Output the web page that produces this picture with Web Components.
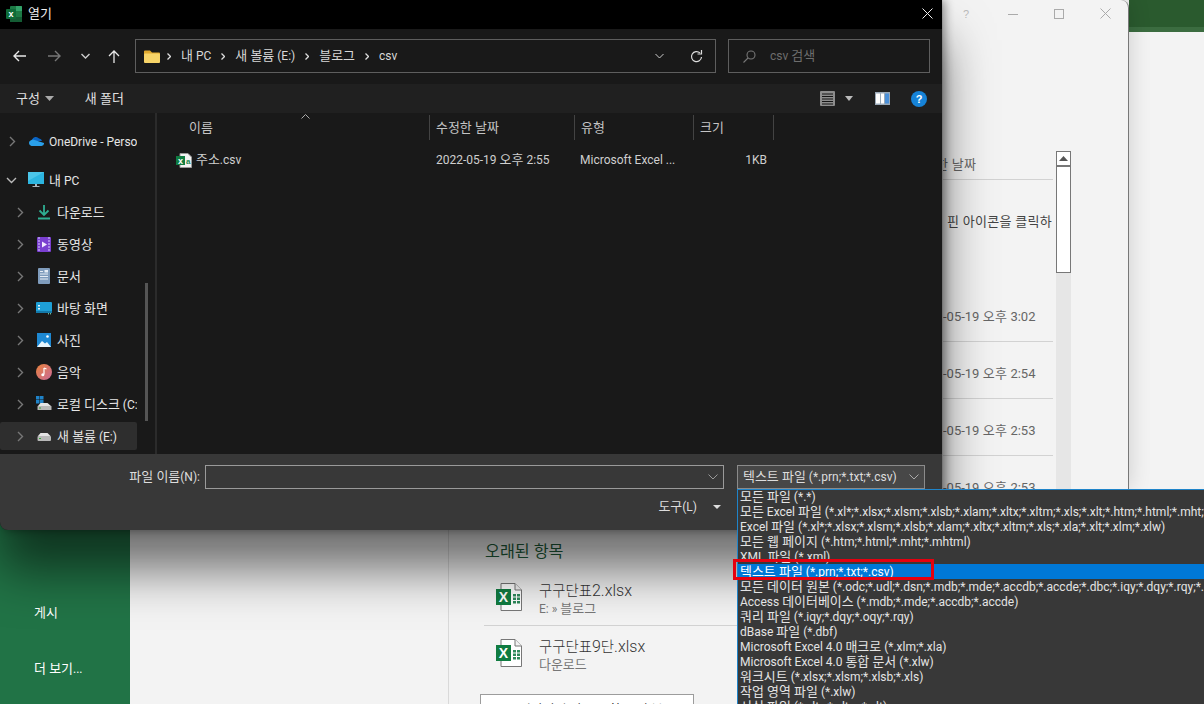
<!DOCTYPE html>
<html lang="ko"><head><meta charset="utf-8">
<style>
html,body{margin:0;padding:0;width:1204px;height:704px;overflow:hidden;background:#fff}
body{font:12px/15px Roboto,"Noto Sans CJK KR",sans-serif}
</style></head><body>
<x-desktop>
  <excel-backstage></excel-backstage>
  <details-window></details-window>
  <file-dialog></file-dialog>
  <type-list></type-list>
  <red-mark></red-mark>
</x-desktop>

<script>
function hangul(root){
  const w=document.createTreeWalker(root,NodeFilter.SHOW_TEXT),nodes=[];
  while(w.nextNode()){const p=w.currentNode.parentNode;if(p.nodeName!=='STYLE'&&p.nodeName.toLowerCase()!=='text'&&/[가-힣]/.test(w.currentNode.data))nodes.push(w.currentNode);}
  nodes.forEach(n=>{
    const f=document.createDocumentFragment();
    n.data.split(/([가-힣]+(?: +[가-힣]+)*)/).forEach((s,i)=>{
      if(!s)return;
      if(i%2){const e=document.createElement('span');e.style.cssText='font-size:calc(1em*var(--k,1.08));letter-spacing:var(--ks,0);display:inline';e.textContent=s;f.appendChild(e);}
      else f.appendChild(document.createTextNode(s));
    });
    n.parentNode.replaceChild(f,n);
  });
}
function def(name,html){
  customElements.define(name,class extends HTMLElement{
    constructor(){super();const r=this.attachShadow({mode:'open'});r.innerHTML=typeof html==='function'?html(this):html;hangul(r);}
  });
}
const xl=`<svg width="26" height="28" viewBox="0 0 26 28"><path d="M5 .5h14l6.500 6.500v20.500H5z" fill="#fff" stroke="#777"/><path d="M19 .5V7h6.500" fill="#f3f3f3" stroke="#777"/><rect x="0" y="6" width="15" height="16" fill="#107c41"/><text x="7.500" y="19" text-anchor="middle" font-family="Liberation Sans" font-weight="700" font-size="14" fill="#fff">X</text><path d="M17 11h3v2.500h-3zM21 11h3v2.500h-3zM17 14.500h3V17h-3zM21 14.500h3V17h-3zM17 18h3v2.500h-3zM21 18h3v2.500h-3z" fill="#2f8a5b"/></svg>`;

def('x-desktop',`<style>:host{display:block;position:relative;width:1204px;height:704px;overflow:hidden;background:#fff}</style><slot></slot>`);

def('red-mark',`<style>:host{position:absolute;left:733px;top:559px;width:201px;height:21px;box-sizing:border-box;border:3px solid #e5000f}</style>`);

def('file-row',h=>`<style>
:host{display:grid;grid-template-columns:26px 1fr;column-gap:17px;height:55px;padding-top:2px;align-items:center;box-sizing:border-box;padding-left:12px;border-bottom:1px solid #d2d2d2;color:#444}
:host([last]){border-bottom:0;height:57px;padding-top:0}
.n{font-size:16px;line-height:19px;color:#333;--k:.9;font-weight:300}
.s{font-size:12px;line-height:15px;color:#777;--k:1.08}
</style><span>${xl}</span><div><div class="n">${h.getAttribute('name')}</div><div class="s">${h.getAttribute('sub')}</div></div>`);

def('excel-backstage',`<style>
:host{position:absolute;left:0;top:0;width:1204px;height:704px;display:grid;grid-template-columns:130px 319px 1fr;background:#f3f3f3;color:#333}
nav{background:#217346;color:#fff;display:flex;flex-direction:column;padding:605px 0 0 34px;font-size:12px;line-height:16px;gap:40px;box-sizing:border-box;height:704px}
.mid{border-right:1px solid #d9d9d9}
.rt{padding:542px 0 0 36px;box-sizing:border-box;height:704px;display:flex;flex-direction:column}
h3{margin:0;font-weight:400;font-size:15px;line-height:20px;color:#1e5c3a}
.list{margin-top:9px;margin-left:-1px;width:400px;display:flex;flex-direction:column}
.btn{margin:11px 0 0 -5px;width:214px;height:40px;flex:none;box-sizing:border-box;border:1px solid #9c9c9c;background:#fff;padding:7px 0 0 16px;display:flex;gap:8px;font-size:12px;color:#222;white-space:nowrap}
.bar{position:absolute;left:1129px;right:0;top:0;height:32px;background:linear-gradient(#2a5a2e 27px,#3b6c40 27px)}
</style>
<nav><span>게시</span><span>더 보기...</span></nav><div class="mid"></div>
<div class="rt"><h3>오래된 항목</h3>
<div class="list"><file-row name="구구단표2.xlsx" sub="E: » 블로그"></file-row><file-row name="구구단표9단.xlsx" sub="다운로드" last></file-row></div>
<div class="btn"><svg width="14" height="14" viewBox="0 0 14 14"><path d="M1 3h5l1 1h6v8H1z" fill="#f0d58a" stroke="#c9a94f"/></svg><span>저장되지 않은 통합 문서 복구</span></div></div>
<div class="bar"></div>`);

def('details-window',`<style>
:host{position:absolute;left:943px;top:0;width:186px;height:489px;box-sizing:border-box;background:#f3f3f3;border-right:1px solid #777;border-top-right-radius:8px;color:#666;font-size:13px;line-height:18px;box-shadow:0 0 22px rgba(0,0,0,.16);overflow:hidden;display:flex;flex-direction:column;--k:1;--ks:.3px}
.tb{height:27px;display:grid;grid-template-columns:repeat(4,46.5px);justify-items:center;align-items:center;flex:none}
.tb svg{display:block}
.body{flex:1;display:grid;grid-template-columns:110px 15px;column-gap:3px;padding-top:124px;min-height:0}
.cols{display:flex;flex-direction:column}
.hd{height:23px;border-bottom:1px solid #d2d2d2;overflow:hidden;white-space:nowrap;padding-top:5px;text-indent:-7px}
.pin{height:18px;padding:33px 0 54px 4px;color:#444;white-space:nowrap;overflow:hidden}
.d{height:33px;padding-top:23px;border-bottom:1px solid #d2d2d2;white-space:nowrap;flex:none}
.sb{background:#e6e6e6;display:flex;flex-direction:column}
.up{height:15px;box-sizing:border-box;background:#fff;border:1px solid #777;display:flex;align-items:center;justify-content:center;flex:none}
.th{height:107px;box-sizing:border-box;background:#fff;border:1px solid #777;flex:none}
</style>
<div class="tb">
<svg width="10" height="12" viewBox="0 0 10 12"><text x="5" y="10" text-anchor="middle" font-family="Liberation Sans" font-size="11" fill="#bbb">?</text></svg>
<svg width="10" height="10" viewBox="0 0 10 10"><path d="M0 5.500h10" stroke="#aaa"/></svg>
<svg width="10" height="10" viewBox="0 0 10 10"><rect x=".5" y=".5" width="9" height="9" fill="none" stroke="#aaa"/></svg>
<svg width="11" height="11" viewBox="0 0 11 11"><path d="M.5.5l10 10M10.500.5l-10 10" stroke="#aaa"/></svg>
</div>
<div class="body"><div class="cols">
<div class="hd">한 날짜</div>
<div class="pin">핀 아이콘을 클릭하</div>
<div class="d">-05-19 오후 3:02</div><div class="d">-05-19 오후 2:54</div><div class="d">-05-19 오후 2:53</div><div class="d">-05-19 오후 2:53</div>
</div><div class="sb"><div class="up"><svg width="9" height="5" viewBox="0 0 9 5"><path d="M4.500 0L9 5H0z" fill="#555"/></svg></div><div class="th"></div></div></div>`);

const chev=`<svg width="7" height="11" viewBox="0 0 7 11"><path d="M1 1l4.500 4.500L1 10" fill="none" stroke="#777" stroke-width="1.400"/></svg>`;
const chevD=`<svg width="11" height="7" viewBox="0 0 11 7"><path d="M1 1l4.500 4.500L10 1" fill="none" stroke="#bbb" stroke-width="1.400"/></svg>`;
const crumbCh=`<svg class="cc" width="4" height="7" viewBox="0 0 4 7"><path d="M.5.5l3 3-3 3" fill="none" stroke="#ddd" stroke-width="1.300"/></svg>`;
const ICONS={
 onedrive:`<svg width="16" height="16" viewBox="0 0 16 16"><path d="M4 7a4 4 0 0 1 7-1.500 3 3 0 0 1 3 2.500H5z" fill="#0a64c4"/><path d="M3.500 13a3 3 0 0 1-.5-5.800A3 3 0 0 1 6.500 7L16 10a2.800 2.800 0 0 1-2.500 3z" fill="#2aa0ea"/></svg>`,
 pc:`<svg width="16" height="16" viewBox="0 0 16 16"><rect x="0" y="0" width="16" height="12" fill="#2cb5e0"/><path d="M0 0h16L0 9z" fill="#6ad6ef" opacity=".5"/><path d="M7 12h2v2H7zM4.500 14h7v1h-7z" fill="#a9b6bf"/></svg>`,
 down:`<svg width="16" height="16" viewBox="0 0 16 16"><path d="M8 1v10M3.500 6.500L8 11l4.500-4.500" fill="none" stroke="#2fae92" stroke-width="1.800"/><path d="M2 14.500h12" stroke="#2fae92" stroke-width="2"/></svg>`,
 video:`<svg width="16" height="16" viewBox="0 0 16 16"><rect x="1" y="1" width="14" height="15" rx="1" fill="#7a3fd0"/><path d="M3 1v15M13 1v15" stroke="#a988e6" stroke-width="2" stroke-dasharray="2 1"/><path d="M6 5.500l5 3-5 3z" fill="#f3e9ff"/></svg>`,
 doc:`<svg width="16" height="16" viewBox="0 0 16 16"><rect x="2" y="0" width="12" height="16" rx="1" fill="#7f9cbc"/><path d="M4 3.500h3M4 6h8M4 8.500h8M4 11h8" stroke="#e6edf5"/><rect x="8.500" y="2" width="3.500" height="2.500" fill="#e6edf5"/></svg>`,
 desk:`<svg width="16" height="16" viewBox="0 0 16 16"><rect x="0" y="2" width="16" height="11" rx="1" fill="#1e9fd6"/><path d="M0 11h16v2H0z" fill="#1479aa"/><path d="M2 5h2v1.500H2zM2 8h2v1.500H2z" fill="#e6f7ff"/><path d="M12 13.800h1M14 13.800h1" stroke="#9fc"/></svg>`,
 photo:`<svg width="16" height="16" viewBox="0 0 16 16"><rect x="1" y="1" width="14" height="14" fill="#1e88d2"/><path d="M1 15l5-6 3 2.500 2-1.500 4 5z" fill="#e8f5fc"/><circle cx="11.500" cy="4.500" r="1.300" fill="#fff"/></svg>`,
 music:`<svg width="16" height="16" viewBox="0 0 16 16"><defs><linearGradient id="m" x1="0" y1="0" x2="1" y2="1"><stop offset="0" stop-color="#e9823c"/><stop offset="1" stop-color="#c96a98"/></linearGradient></defs><circle cx="8" cy="8" r="8" fill="url(#m)"/><path d="M8 4v6.500" stroke="#fff" stroke-width="1.200"/><circle cx="6.800" cy="10.800" r="1.500" fill="#fff"/><path d="M8 4l2.500 1" stroke="#fff" stroke-width="1.200"/></svg>`,
 c:`<svg width="16" height="16" viewBox="0 0 16 16"><path d="M0 0h3.500v3.500H0zM4 0h3.500v3.500H4zM0 4h3.500v3.500H0zM4 4h3.500v3.500H4z" fill="#1f83c9"/><path d="M2 10l2.500-3h7L15 10z" fill="#e4e4e4"/><rect x="1.500" y="10" width="14" height="4" rx=".5" fill="#b8b8b8"/><path d="M3 12h2" stroke="#3a3"/></svg>`,
 e:`<svg width="16" height="16" viewBox="0 0 16 16"><path d="M2 8l2.500-3h7L14.500 8z" fill="#e4e4e4"/><rect x="1.500" y="8" width="13.500" height="5" rx="1" fill="#b8b8b8"/><path d="M3 10.500h2" stroke="#3a3"/></svg>`
};
def('nav-row',h=>{const deep=h.hasAttribute('deep'),open=h.hasAttribute('open');return `<style>
:host{display:flex;align-items:center;height:32px;flex:none;white-space:nowrap;overflow:hidden;color:#e6e6e6;font-size:12px;position:relative}
:host([sel])::before{content:"";position:absolute;inset:2px 0 2px 0;background:#2e2e2e;border-radius:2px}
span,i{position:relative;display:flex;align-items:center;font-style:normal;flex:none}
.c{width:${deep?36:28}px;padding-left:${deep?17:open?6:9}px;box-sizing:border-box}
.ic{width:21px}
span{display:block;margin-top:2px}
</style><i class="c">${open?chevD:chev}</i><i class="ic">${ICONS[h.getAttribute('icon')]}</i><span><slot></slot></span>`});

def('file-dialog',`<style>
:host{position:absolute;left:0;top:0;width:942px;height:530px;display:flex;flex-direction:column;background:#191919;color:#e0e0e0;border-bottom-left-radius:8px;box-shadow:0 40px 50px rgba(0,0,0,.55),3px 0 10px rgba(0,0,0,.4);font-size:12px}
svg{display:block}
.title{height:27px;padding-bottom:2px;background:#000;display:flex;align-items:center;padding-left:6px;padding-right:9px;gap:6px;flex:none;color:#eee}
.title .x{margin-left:auto}
.addr{height:55px;flex:none;display:flex;align-items:center;padding:0 12px 1px 0;box-sizing:border-box}
.navs{width:135px;flex:none;display:grid;grid-template-columns:38px 32px 30px 27px;justify-items:center;align-items:center}
.crumb{width:581px;height:34px;box-sizing:border-box;border:1px solid #5e5e5e;display:flex;align-items:center;padding:0 12px 0 8px;color:#d8d8d8}
.crumb .cc{margin:0 10px;flex:none}
.crumb .fo{margin-right:-3px;flex:none}
.crumb .end{margin-left:auto;display:flex;gap:26px;align-items:center}
.search{width:202px;margin-left:12px;height:34px;box-sizing:border-box;border:1px solid #5e5e5e;display:flex;align-items:center;padding:0 0 0 14px;gap:14px;color:#6d6d6d}
.tools{height:29px;flex:none;background:#202020;display:flex;align-items:center;padding:0 15px 0 16px}
.tools .tri{margin:0 0 0 5px}
.tools .nf{margin-left:31px}
.tools .r{margin-left:auto;display:flex;align-items:center}
.main{flex:1;display:flex;min-height:0}
.side{width:155px;flex:none;border-right:2px solid #2b2b2b;display:flex;position:relative}
.tree{width:137px;display:flex;flex-direction:column;overflow:hidden;padding-top:12px}
.gap{height:7px;flex:none}
.scroll{width:3px;margin-left:8px;margin-top:170px;height:138px;background:#555}
.files{flex:1;min-width:0;color:#cfcfcf}
.head{height:27px;display:grid;grid-template-columns:273px 145px 119px 80px;position:relative}
.head div{border-right:1px solid #434343;height:25px;margin-top:2px;padding:5px 0 0 6px;box-sizing:border-box;color:#c4c4c4}
.head div:first-child{padding-left:32px}
.caret{position:absolute;left:144px;top:1px}
.row{display:grid;grid-template-columns:273px 145px 119px 80px;height:38px;padding-top:1px;box-sizing:content-box;align-items:center}
.row span{white-space:nowrap}
.nm{display:flex;align-items:center;gap:4px;margin-left:19px}
.foot{height:76px;flex:none;background:#383838;border-bottom-left-radius:8px;display:grid;grid-template-columns:200px 524px 201px;grid-template-rows:24px 18px;padding-top:11px;box-sizing:border-box;row-gap:9px}
.lb{text-align:right;line-height:24px;color:#ddd;white-space:nowrap}
.inp{margin-left:5px;border:1px solid #9a9a9a;box-sizing:border-box;display:flex;justify-content:flex-end;align-items:center;padding-right:5px}
.sel{margin-left:13px;width:188px;box-sizing:border-box;border:1px solid #8b8b8b;background:#474747;display:flex;align-items:center;justify-content:space-between;padding:0 5px;color:#ddd;white-space:nowrap}
.tl{grid-column:2;display:flex;justify-content:flex-end;align-items:center;gap:16px;color:#ddd;padding-right:3px}
</style>
<div class="title">
<svg width="16" height="16" viewBox="0 0 16 16"><rect x="4" y="0" width="12" height="16" rx="1" fill="#1d7a45"/><path d="M10 0h5a1 1 0 0 1 1 1v4h-6z" fill="#33a369"/><path d="M4 11h12v4a1 1 0 0 1-1 1H5a1 1 0 0 1-1-1z" fill="#145c34"/><rect x="0" y="3" width="10" height="10" rx="1" fill="#0e6b38"/><text x="5" y="11" text-anchor="middle" font-family="Liberation Sans" font-weight="700" font-size="9" fill="#fff">x</text></svg>
<span>열기</span>
<svg class="x" width="11" height="11" viewBox="0 0 11 11"><path d="M.5.5l10 10M10.500.5l-10 10" stroke="#eee"/></svg></div>
<div class="addr">
<div class="navs">
<svg width="13" height="12" viewBox="0 0 13 12"><path d="M6 1L1 6l5 5M1 6h12" fill="none" stroke="#e8e8e8" stroke-width="1.400"/></svg>
<svg width="13" height="12" viewBox="0 0 13 12"><path d="M7 1l5 5-5 5M12 6H0" fill="none" stroke="#777" stroke-width="1.400"/></svg>
<svg width="9" height="6" viewBox="0 0 9 6"><path d="M.5 1l4 4 4-4" fill="none" stroke="#ccc" stroke-width="1.400"/></svg>
<svg width="12" height="13" viewBox="0 0 12 13"><path d="M1 6l5-5 5 5M6 1v12" fill="none" stroke="#e8e8e8" stroke-width="1.300"/></svg>
</div>
<div class="crumb">
<svg class="fo" width="16" height="13" viewBox="0 0 16 13"><path d="M0 1.500A1 1 0 0 1 1 .5h5l2 2h7a1 1 0 0 1 1 1V5H0z" fill="#e0a92e"/><rect x="0" y="3.500" width="16" height="9.500" rx="1" fill="#f7d468"/></svg>
${crumbCh}<span>내 PC</span>${crumbCh}<span>새 볼륨 (E:)</span>${crumbCh}<span>블로그</span>${crumbCh}<span>csv</span>
<div class="end"><svg width="9" height="6" viewBox="0 0 9 6"><path d="M.5 1l4 4 4-4" fill="none" stroke="#ccc"/></svg>
<svg width="13" height="13" viewBox="0 0 13 13"><path d="M11.500 7a5 5 0 1 1-1.500-4" fill="none" stroke="#ddd" stroke-width="1.200"/><path d="M11.500 0v4h-4" fill="none" stroke="#ddd" stroke-width="1.200"/></svg></div>
</div>
<div class="search"><svg width="13" height="13" viewBox="0 0 13 13"><circle cx="8" cy="5" r="4" fill="none" stroke="#777" stroke-width="1.100"/><path d="M5 8l-4.500 4.500" stroke="#777" stroke-width="1.100"/></svg><span>csv 검색</span></div>
</div>
<div class="tools"><span>구성</span><svg class="tri" width="9" height="5" viewBox="0 0 9 5"><path d="M0 0h9L4.500 5z" fill="#aaa"/></svg><span class="nf">새 폴더</span>
<div class="r">
<svg width="15" height="15" viewBox="0 0 15 15"><rect width="15" height="15" rx="1" fill="#8d8d8d"/><path d="M2 3h11M2 5.500h11M2 8h11M2 10.500h11M2 13h11" stroke="#151515"/></svg>
<svg style="margin:0 0 0 10px" width="8" height="5" viewBox="0 0 8 5"><path d="M0 0h8L4 5z" fill="#bbb"/></svg>
<svg style="margin-left:22px" width="15" height="13" viewBox="0 0 15 13"><rect width="15" height="13" fill="#9aa9b8"/><rect x="1" y="1.500" width="4" height="10" fill="#fff"/><rect x="6" y="1.500" width="3" height="10" fill="#fff"/><rect x="10" y="1.500" width="4" height="10" fill="#4a90d9"/></svg>
<svg style="margin-left:21px" width="16" height="16" viewBox="0 0 16 16"><circle cx="8" cy="8" r="8" fill="#1683d8"/><text x="8" y="12" text-anchor="middle" font-family="Liberation Sans" font-weight="700" font-size="11" fill="#fff">?</text></svg>
</div></div>
<div class="main">
<div class="side"><div class="tree">
<nav-row icon="onedrive">OneDrive - Personal</nav-row><div class="gap"></div>
<nav-row icon="pc" open>내 PC</nav-row>
<nav-row icon="down" deep>다운로드</nav-row>
<nav-row icon="video" deep>동영상</nav-row>
<nav-row icon="doc" deep>문서</nav-row>
<nav-row icon="desk" deep>바탕 화면</nav-row>
<nav-row icon="photo" deep>사진</nav-row>
<nav-row icon="music" deep>음악</nav-row>
<nav-row icon="c" deep>로컬 디스크 (C:)</nav-row>
<nav-row icon="e" deep sel>새 볼륨 (E:)</nav-row>
</div><div class="scroll"></div></div>
<div class="files">
<div class="head"><div>이름</div><div>수정한 날짜</div><div>유형</div><div>크기</div>
<svg class="caret" width="9" height="5" viewBox="0 0 9 5"><path d="M.5 4.500l4-4 4 4" fill="none" stroke="#aaa"/></svg></div>
<div class="row"><span class="nm">
<svg width="16" height="15" viewBox="0 0 16 15"><path d="M4 .5h8l3.500 3.500v10.500H4z" fill="#f2f2f2" stroke="#999"/><rect x="0" y="3" width="9" height="9" fill="#107c41"/><text x="4.500" y="10.500" text-anchor="middle" font-family="Liberation Sans" font-weight="700" font-size="9" fill="#fff">x</text><text x="12.300" y="10.500" text-anchor="middle" font-family="Liberation Sans" font-weight="700" font-size="8" fill="#1a8a50">a</text></svg><span>주소.csv</span></span>
<span style="padding-left:6px">2022-05-19 오후 2:55</span><span style="padding-left:5px">Microsoft Excel ...</span><span style="text-align:right;padding-right:7px">1KB</span></div>
</div></div>
<div class="foot"><div class="lb">파일 이름(N):</div><div class="inp"><svg width="10" height="6" viewBox="0 0 10 6"><path d="M.5.5l4.500 4.500L9.500.5" fill="none" stroke="#999"/></svg></div>
<div class="sel"><span>텍스트 파일 (*.prn;*.txt;*.csv)</span><svg width="10" height="6" viewBox="0 0 10 6"><path d="M.5.5l4.500 4.500L9.500.5" fill="none" stroke="#aaa"/></svg></div>
<div class="tl"><span>도구(L)</span><svg width="8" height="4" viewBox="0 0 8 4"><path d="M0 0h8L4 4z" fill="#ddd"/></svg></div></div>`);

const TYPES=["모든 파일 (*.*)","모든 Excel 파일 (*.xl*;*.xlsx;*.xlsm;*.xlsb;*.xlam;*.xltx;*.xltm;*.xls;*.xlt;*.htm;*.html;*.mht;*.mhtml;*.xml;*.xla;*.xlm;*.xlw;*.odc;*.ods)","Excel 파일 (*.xl*;*.xlsx;*.xlsm;*.xlsb;*.xlam;*.xltx;*.xltm;*.xls;*.xla;*.xlt;*.xlm;*.xlw)","모든 웹 페이지 (*.htm;*.html;*.mht;*.mhtml)","XML 파일 (*.xml)","텍스트 파일 (*.prn;*.txt;*.csv)","모든 데이터 원본 (*.odc;*.udl;*.dsn;*.mdb;*.mde;*.accdb;*.accde;*.dbc;*.iqy;*.dqy;*.rqy;*.oqy;*.cub)","Access 데이터베이스 (*.mdb;*.mde;*.accdb;*.accde)","쿼리 파일 (*.iqy;*.dqy;*.oqy;*.rqy)","dBase 파일 (*.dbf)","Microsoft Excel 4.0 매크로 (*.xlm;*.xla)","Microsoft Excel 4.0 통합 문서 (*.xlw)","워크시트 (*.xlsx;*.xlsm;*.xlsb;*.xls)","작업 영역 파일 (*.xlw)","서식 파일 (*.xltx;*.xltm;*.xlt)"];
def('type-list',`<style>
:host{position:absolute;left:737px;top:489px;width:467px;height:215px;box-sizing:border-box;background:#383838;border:1px solid #1f84c9;border-right:0;border-bottom:0;overflow:hidden;color:#e4e4e4;font-size:12px}
.o{height:15px;line-height:15px;padding-left:2px;white-space:nowrap}
.o.s{background:#0078d7;color:#fff}
.l{margin-top:-1px}
</style><div class="l">${TYPES.map((t,i)=>`<div class="o${i==5?' s':''}">${t}</div>`).join('')}</div>`);
</script>
</body></html>
